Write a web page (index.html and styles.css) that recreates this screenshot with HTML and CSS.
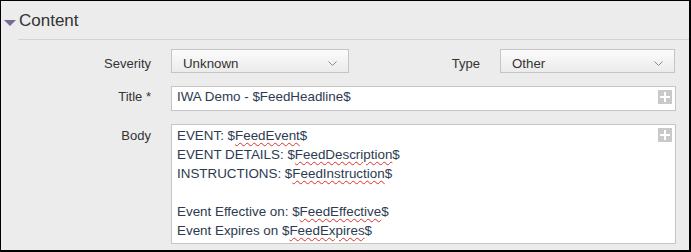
FILE: index.html
```html
<!DOCTYPE html>
<html lang="en">
<head>
    <meta charset="UTF-8">
    <meta name="viewport" content="width=device-width, initial-scale=1.0">
    <title>Content</title>
    <link rel="stylesheet" href="styles.css">
</head>
<body>
    <div class="panel">
        <div class="section-head">
            <span class="caret"></span>
            <div class="section-title">Content</div>
        </div>

        <div class="form">
            <div class="row">
                <label class="label">Severity</label>
                <div class="select select-severity">
                    Unknown
                    <svg class="chevron" width="9" height="5" viewBox="0 0 9 5"><path d="M0.5 0.5 L4.5 4.5 L8.5 0.5" fill="none" stroke="#8a8a8a" stroke-width="1"/></svg>
                </div>
                <label class="label label-type">Type</label>
                <div class="select select-type">
                    Other
                    <svg class="chevron" width="9" height="5" viewBox="0 0 9 5"><path d="M0.5 0.5 L4.5 4.5 L8.5 0.5" fill="none" stroke="#8a8a8a" stroke-width="1"/></svg>
                </div>
            </div>

            <div class="row">
                <label class="label label-title">Title *</label>
                <div class="text-input">
                    IWA Demo - $FeedHeadline$
                    <span class="plus-btn"></span>
                </div>
            </div>

            <div class="row">
                <label class="label label-body">Body</label>
                <div class="text-area">
                    <div>EVENT: $<span class="misspelled">FeedEvent</span>$</div>
                    <div>EVENT DETAILS: $<span class="misspelled">FeedDescription</span>$</div>
                    <div>INSTRUCTIONS: $<span class="misspelled">FeedInstruction</span>$</div>
                    <div>&nbsp;</div>
                    <div>Event Effective on: $<span class="misspelled">FeedEffective</span>$</div>
                    <div>Event Expires on $<span class="misspelled">FeedExpires</span>$</div>
                    <span class="plus-btn"></span>
                </div>
            </div>
        </div>
    </div>
</body>
</html>
```

FILE: styles.css
```css
* {
    box-sizing: border-box;
}

body {
    margin: 0;
    font-family: "Liberation Sans", Arial, sans-serif;
    font-size: 13px;
    color: #333;
}

.panel {
    width: 691px;
    height: 252px;
    overflow: hidden;
    background-color: #ececec;
    border-style: solid;
    border-color: #000;
    border-width: 1px 2px 2px 1px;
}

.section-head {
    display: flex;
    align-items: flex-start;
}

.caret {
    width: 0;
    height: 0;
    margin: 19px 2px 0 3px;
    border-left: 6px solid transparent;
    border-right: 6px solid transparent;
    border-top: 6px solid #7a6895;
}

.section-title {
    flex: 1;
    font-size: 17px;
    line-height: 20px;
    color: #333;
    padding: 10px 0 8px 1px;
    border-bottom: 1px solid #d3d3d3;
}

.form {
    padding-top: 9px;
}

.row {
    display: flex;
    align-items: flex-start;
    margin-bottom: 13px;
}

.label {
    width: 150px;
    margin-right: 20px;
    text-align: right;
    line-height: 15px;
    padding-top: 7px;
    color: #333;
}

.label-type {
    width: 131px;
}

.label-title {
    padding-top: 3px;
}

.label-body {
    line-height: 19px;
    padding-top: 2px;
}

.select {
    position: relative;
    height: 24px;
    padding: 6px 0 0 11px;
    line-height: 15px;
    font-size: 13.3px;
    color: #333;
    border: 1px solid #c5c5c5;
    background: linear-gradient(#fcfcfc, #ebebeb);
}

.select-severity {
    width: 178px;
}

.select-type {
    width: 175px;
}

.chevron {
    position: absolute;
    right: 11px;
    top: 11px;
}

.text-input,
.text-area {
    position: relative;
    width: 505px;
    border: 1px solid #c5c5c5;
    background-color: #fff;
    color: #2c3b50;
    font-size: 13.4px;
    padding-left: 5px;
}

.text-input {
    height: 25px;
    line-height: 15px;
    padding-top: 2px;
}

.text-area {
    height: 120px;
    line-height: 19px;
    padding-top: 1px;
}

.misspelled {
    text-decoration: underline wavy #e0302a;
    text-decoration-thickness: 1px;
    text-underline-offset: 2px;
}

.plus-btn {
    position: absolute;
    top: 3px;
    right: 3px;
    width: 14px;
    height: 14px;
    background-color: #c9c9c9;
}

.plus-btn::before,
.plus-btn::after {
    content: "";
    position: absolute;
    background-color: #fff;
}

.plus-btn::before {
    left: 2px;
    top: 6px;
    width: 10px;
    height: 2px;
}

.plus-btn::after {
    left: 6px;
    top: 2px;
    width: 2px;
    height: 10px;
}
```
